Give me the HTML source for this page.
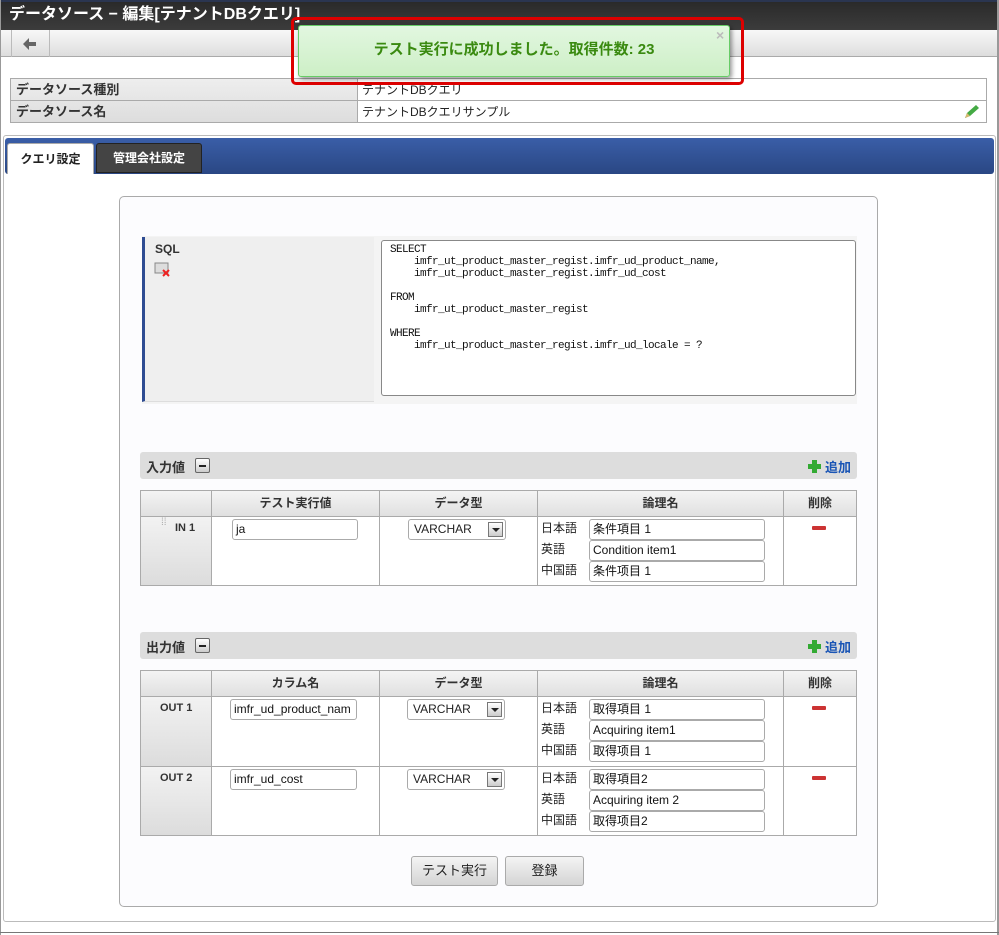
<!DOCTYPE html>
<html><head><meta charset="utf-8"><style>
*{box-sizing:border-box;margin:0;padding:0}
body{width:999px;height:935px;position:relative;background:#fff;font-family:"Liberation Sans","Noto Sans CJK JP",sans-serif;font-size:12px;color:#222;overflow:hidden}
.a{position:absolute}
.inp{position:absolute;background:#fff;border:1px solid #aaa;border-radius:3px;height:21px;font-size:12px;line-height:19px;padding-left:3px;color:#111;white-space:nowrap;overflow:hidden}
.sel{position:absolute;background:#fff;border:1px solid #aaa;border-radius:3px;height:21px;width:98px;font-size:12px;line-height:19px;padding-left:5px}
.sel i{position:absolute;right:2px;top:2px;width:15px;height:15px;border:1px solid #777;background:linear-gradient(#fff,#ccc)}
.sel i:after{content:"";position:absolute;left:3px;top:5px;border-left:4px solid transparent;border-right:4px solid transparent;border-top:4px solid #222}
.th{position:absolute;background:linear-gradient(#f4f4f4,#e0e0e0);border-right:1px solid #aaa;text-align:center;font-weight:bold;font-size:12px;line-height:25px;height:25px;top:0;color:#333}
.tbl{position:absolute;border:1px solid #aaa;background:#fff}
.vl{position:absolute;top:0;bottom:0;width:1px;background:#aaa}
.hl{position:absolute;left:0;right:0;height:1px;background:#aaa}
.lab{position:absolute;font-size:12px;line-height:21px}
.minus{position:absolute;width:14px;height:4px;background:#c33;border-radius:1px}
.sec{position:absolute;left:140px;width:717px;height:27px;background:#ddd;border-radius:3px}
.sec b{position:absolute;left:6px;top:5px;font-size:13px;color:#333}
.sec .tog{position:absolute;left:55px;top:6px;width:15px;height:15px;border:1px solid #666;border-radius:2px;background:linear-gradient(#fff,#ccc)}
.sec .tog:after{content:"";position:absolute;left:3px;top:6px;width:7px;height:2px;background:#222}
.sec .add{position:absolute;right:6px;top:5px;color:#1a55b5;font-weight:bold;font-size:13px}
.plus{display:inline-block;position:relative;width:13px;height:13px;vertical-align:-1px;margin-right:4px}
.plus:before{content:"";position:absolute;left:4px;top:0;width:5px;height:13px;background:#3a3}
.plus:after{content:"";position:absolute;left:0;top:4px;width:13px;height:5px;background:#3a3}
.btn{position:absolute;height:30px;border:1px solid #aaa;border-radius:3px;background:linear-gradient(#f4f4f4,#d4d4d4);text-align:center;line-height:28px;font-size:13px;color:#222}
</style></head><body>
<div class="a" style="left:0;top:0;width:999px;height:30px;background:linear-gradient(#2a2a2a,#3c3c3c);border-top:2px solid #2a3550"></div>
<div class="a" style="left:9px;top:4px;color:#fff;font-size:16px;font-weight:bold;line-height:22px">データソース − 編集[テナントDBクエリ]</div>
<div class="a" style="left:0;top:30px;width:999px;height:27px;background:linear-gradient(#f8f8f8,#ddd);border-bottom:1px solid #aaa"></div>
<div class="a" style="left:11px;top:30px;width:39px;height:27px;border-left:1px solid #bbb;border-right:1px solid #bbb"></div>
<svg class="a" style="left:23px;top:38px" width="14" height="12"><path d="M0 6 L6 0 L6 4 L13 4 L13 8 L6 8 L6 12 Z" fill="#666"/></svg>
<div class="a" style="left:997px;top:0;width:2px;height:935px;background:#999"></div>
<div class="a" style="left:0;top:0;width:1px;height:935px;background:#999"></div>
<div class="a" style="left:10px;top:78px;width:977px;height:45px;border:1px solid #aaa;background:#fff"></div>
<div class="a" style="left:11px;top:79px;width:346px;height:43px;background:linear-gradient(#eee,#ddd)"></div>
<div class="a" style="left:357px;top:79px;width:1px;height:43px;background:#aaa"></div>
<div class="a" style="left:11px;top:100px;width:975px;height:1px;background:#aaa"></div>
<div class="a" style="left:16px;top:79px;font-weight:bold;font-size:13px;color:#333">データソース種別</div>
<div class="a" style="left:16px;top:101px;font-weight:bold;font-size:13px;color:#333">データソース名</div>
<div class="a" style="left:362px;top:81px;font-size:12px">テナントDBクエリ</div>
<div class="a" style="left:362px;top:103px;font-size:12px">テナントDBクエリサンプル</div>
<svg class="a" style="left:963px;top:104px" width="18" height="16"><path d="M2 14 L4 9 L13 1 L16 4 L7 12 Z" fill="#4a4"/><path d="M2 14 L4 9 L7 12Z" fill="#d9b870"/></svg>
<div class="a" style="left:3px;top:135px;width:993px;height:787px;border:1px solid #bbb;border-radius:3px;background:#fff"></div>
<div class="a" style="left:5px;top:138px;width:989px;height:36px;background:linear-gradient(#3a5ea8,#2a4784);border-radius:3px"></div>
<div class="a" style="left:7px;top:143px;width:87px;height:31px;background:#fff;border:1px solid #aaa;border-bottom:none;border-radius:3px 3px 0 0;text-align:center;line-height:30px;font-weight:bold;font-size:12px">クエリ設定</div>
<div class="a" style="left:96px;top:143px;width:106px;height:30px;background:#444;border:1px solid #222;border-radius:3px 3px 0 0;text-align:center;line-height:29px;font-weight:bold;font-size:12px;color:#fff">管理会社設定</div>
<div class="a" style="left:0;top:932px;width:999px;height:1px;background:#777"></div>
<div class="a" style="left:119px;top:196px;width:759px;height:711px;border:1px solid #aaa;border-radius:5px;background:#fcfcfe"></div>
<div class="a" style="left:142px;top:236px;width:715px;height:168px;background:#f4f4f4"></div>
<div class="a" style="left:142px;top:237px;width:232px;height:165px;background:#efefef;border-left:3px solid #2e4c92;border-bottom:1px solid #ddd"></div>
<div class="a" style="left:155px;top:242px;font-weight:bold;font-size:12px;color:#333">SQL</div>
<svg class="a" style="left:154px;top:262px" width="20" height="16"><rect x="1" y="1" width="13" height="10" fill="#ddd" stroke="#888"/><path d="M9 8 L15 14 M15 8 L9 14" stroke="#e22" stroke-width="2"/></svg>
<div class="a" style="left:381px;top:240px;width:475px;height:156px;background:#fff;border:1px solid #888;border-radius:3px;font-family:'Liberation Mono',monospace;font-size:11px;line-height:12px;padding:3px 8px;white-space:pre;color:#111;letter-spacing:-0.6px">SELECT
    imfr_ut_product_master_regist.imfr_ud_product_name,
    imfr_ut_product_master_regist.imfr_ud_cost

FROM
    imfr_ut_product_master_regist

WHERE
    imfr_ut_product_master_regist.imfr_ud_locale = ?</div>
<div class="sec" style="top:452px"><b>入力値</b><span class="tog"></span><span class="add"><span class="plus"></span>追加</span></div>
<div class="tbl" style="left:140px;top:490px;width:717px;height:96px">
 <div class="th" style="left:0;width:71px"></div>
 <div class="th" style="left:71px;width:168px">テスト実行値</div>
 <div class="th" style="left:239px;width:158px">データ型</div>
 <div class="th" style="left:397px;width:246px">論理名</div>
 <div class="th" style="left:643px;width:72px;border-right:none">削除</div>
 <div class="hl" style="top:25px"></div>
 <div class="a" style="left:0;top:26px;width:70px;height:68px;background:linear-gradient(#f2f2f2,#dcdcdc)"></div>
 <div class="vl" style="left:70px"></div><div class="vl" style="left:238px"></div><div class="vl" style="left:396px"></div><div class="vl" style="left:642px"></div>
 <div class="a" style="left:20px;top:30px;color:#aaa;font-size:10px;line-height:4px">⁞⁞</div>
 <div class="a" style="left:34px;top:31px;font-weight:bold;font-size:11px;color:#333">IN 1</div>
</div>
<div class="inp" style="left:232px;top:519px;width:126px">ja</div>
<div class="sel" style="left:408px;top:519px">VARCHAR<i></i></div>
<div class="lab" style="left:541px;top:518px">日本語</div><div class="inp" style="left:589px;top:519px;width:176px">条件項目 1</div>
<div class="lab" style="left:541px;top:539px">英語</div><div class="inp" style="left:589px;top:540px;width:176px">Condition item1</div>
<div class="lab" style="left:541px;top:560px">中国語</div><div class="inp" style="left:589px;top:561px;width:176px">条件项目 1</div>
<div class="minus" style="left:812px;top:526px"></div>
<div class="sec" style="top:632px"><b>出力値</b><span class="tog"></span><span class="add"><span class="plus"></span>追加</span></div>
<div class="tbl" style="left:140px;top:670px;width:717px;height:166px">
 <div class="th" style="left:0;width:71px"></div>
 <div class="th" style="left:71px;width:168px">カラム名</div>
 <div class="th" style="left:239px;width:158px">データ型</div>
 <div class="th" style="left:397px;width:246px">論理名</div>
 <div class="th" style="left:643px;width:72px;border-right:none">削除</div>
 <div class="hl" style="top:25px"></div>
 <div class="a" style="left:0;top:26px;width:70px;height:69px;background:linear-gradient(#f2f2f2,#dcdcdc)"></div>
 <div class="a" style="left:0;top:96px;width:70px;height:68px;background:linear-gradient(#f2f2f2,#dcdcdc)"></div>
 <div class="hl" style="top:95px"></div>
 <div class="vl" style="left:70px"></div><div class="vl" style="left:238px"></div><div class="vl" style="left:396px"></div><div class="vl" style="left:642px"></div>
 <div class="a" style="left:19px;top:31px;font-weight:bold;font-size:11px;color:#333">OUT 1</div>
 <div class="a" style="left:19px;top:101px;font-weight:bold;font-size:11px;color:#333">OUT 2</div>
</div>
<div class="inp" style="left:230px;top:699px;width:127px">imfr_ud_product_nam</div>
<div class="sel" style="left:407px;top:699px">VARCHAR<i></i></div>
<div class="lab" style="left:541px;top:698px">日本語</div><div class="inp" style="left:589px;top:699px;width:176px">取得項目 1</div>
<div class="lab" style="left:541px;top:719px">英語</div><div class="inp" style="left:589px;top:720px;width:176px">Acquiring item1</div>
<div class="lab" style="left:541px;top:740px">中国語</div><div class="inp" style="left:589px;top:741px;width:176px">取得项目 1</div>
<div class="minus" style="left:812px;top:706px"></div>
<div class="inp" style="left:230px;top:769px;width:127px">imfr_ud_cost</div>
<div class="sel" style="left:407px;top:769px">VARCHAR<i></i></div>
<div class="lab" style="left:541px;top:768px">日本語</div><div class="inp" style="left:589px;top:769px;width:176px">取得項目2</div>
<div class="lab" style="left:541px;top:789px">英語</div><div class="inp" style="left:589px;top:790px;width:176px">Acquiring item 2</div>
<div class="lab" style="left:541px;top:810px">中国語</div><div class="inp" style="left:589px;top:811px;width:176px">取得项目2</div>
<div class="minus" style="left:812px;top:776px"></div>
<div class="btn" style="left:411px;top:856px;width:87px">テスト実行</div>
<div class="btn" style="left:505px;top:856px;width:79px">登録</div>
<div class="a" style="left:291px;top:17px;width:453px;height:68px;border:3px solid #d00;border-radius:5px"></div>
<div class="a" style="left:298px;top:25px;width:432px;height:52px;background:linear-gradient(#e2f7e0,#cdefc6);border:1px solid #6c6;border-radius:3px;box-shadow:2px 2px 4px rgba(0,0,0,.4);text-align:center;line-height:48px;color:#3a8a10;font-weight:bold;font-size:15px">テスト実行に成功しました。取得件数: 23</div>
<div class="a" style="left:716px;top:27px;color:#bbb;font-size:14px;font-weight:bold">×</div>
</body></html>
